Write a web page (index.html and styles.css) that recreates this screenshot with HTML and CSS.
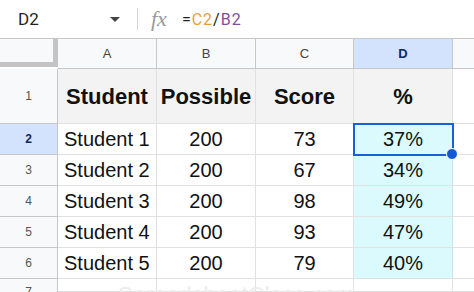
FILE: index.html
```html
<!DOCTYPE html>
<html lang="en">
<head>
    <meta charset="UTF-8">
    <title>Score percentage</title>
    <link rel="stylesheet" href="styles.css">
</head>
<body>
    <!-- formula bar -->
    <div class="toolbar">
        <div class="name-box">D2</div>
        <div class="caret"></div>
        <div class="divider"></div>
        <div class="fx">fx</div>
        <div class="formula">=<span class="ref-c">C2</span>/<span class="ref-b">B2</span></div>
    </div>

    <!-- grid -->
    <div class="sheet">
        <div class="corner"></div>
        <div class="col-head">A</div>
        <div class="col-head">B</div>
        <div class="col-head">C</div>
        <div class="col-head active">D</div>
        <div class="col-head blank"></div>

        <div class="row-head">1</div>
        <div class="cell title">Student</div>
        <div class="cell title">Possible</div>
        <div class="cell title">Score</div>
        <div class="cell title">%</div>
        <div class="cell blank"></div>

        <div class="row-head active">2</div>
        <div class="cell name">Student 1</div>
        <div class="cell">200</div>
        <div class="cell">73</div>
        <div class="cell pct selected">37%</div>
        <div class="cell blank"></div>

        <div class="row-head">3</div>
        <div class="cell name">Student 2</div>
        <div class="cell">200</div>
        <div class="cell">67</div>
        <div class="cell pct">34%</div>
        <div class="cell blank"></div>

        <div class="row-head">4</div>
        <div class="cell name">Student 3</div>
        <div class="cell">200</div>
        <div class="cell">98</div>
        <div class="cell pct">49%</div>
        <div class="cell blank"></div>

        <div class="row-head">5</div>
        <div class="cell name">Student 4</div>
        <div class="cell">200</div>
        <div class="cell">93</div>
        <div class="cell pct">47%</div>
        <div class="cell blank"></div>

        <div class="row-head">6</div>
        <div class="cell name">Student 5</div>
        <div class="cell">200</div>
        <div class="cell">79</div>
        <div class="cell pct">40%</div>
        <div class="cell blank"></div>

        <div class="row-head last">7</div>
        <div class="cell"></div>
        <div class="cell"></div>
        <div class="cell"></div>
        <div class="cell"></div>
        <div class="cell blank"></div>

        <div class="watermark">SpreadsheetClass.com</div>
    </div>
</body>
</html>
```

FILE: styles.css
```css
* {
    box-sizing: border-box;
}
body {
    margin: 0;
    width: 474px;
    height: 292px;
    overflow: hidden;
    background: #fff;
    font-family: Arial, "Liberation Sans", sans-serif;
    color: #111;
}
.toolbar {
    height: 39px;
    display: flex;
    align-items: center;
    border-bottom: 1px solid #c4c7c5;
    background: #fff;
}
.name-box {
    width: 104px;
    padding-left: 18px;
    font-family: Roboto, Arial, sans-serif;
    font-size: 17px;
    color: #1f1f1f;
}
.caret {
    width: 0;
    height: 0;
    border-left: 5px solid transparent;
    border-right: 5px solid transparent;
    border-top: 5px solid #444;
    margin-left: 6px;
}
.divider {
    width: 1px;
    height: 22px;
    background: #d5d5d5;
    margin-left: 17px;
}
.fx {
    margin-left: 13px;
    font-family: "Liberation Serif", "DejaVu Serif", serif;
    font-style: italic;
    font-size: 22px;
    color: #9a9a9a;
    letter-spacing: 0;
}
.formula {
    margin-left: 15px;
    font-family: Roboto, Arial, sans-serif;
    font-size: 16px;
    color: #222;
    letter-spacing: 1px;
}
.ref-c {
    color: #e69f3c;
}
.ref-b {
    color: #7d4f9a;
}
.sheet {
    position: relative;
    display: grid;
    grid-template-columns: 58px 99px 99px 98px 99px 1fr;
    grid-template-rows: 30px 55px 31px 31px 31px 31px 31px 13px;
}
.corner {
    background: #f8f9fa;
    border-right: 5px solid #c4c4c4;
    border-bottom: 5px solid #c4c4c4;
    margin-bottom: 2px;
}
.col-head {
    display: flex;
    align-items: center;
    justify-content: center;
    background: #f8f9fa;
    border-right: 1px solid #c7c7c7;
    border-bottom: 1px solid #c7c7c7;
    font-size: 13px;
    color: #444;
}
.col-head.active {
    background: #d3e3fd;
    color: #0b2a60;
    font-weight: bold;
}
.col-head.blank {
    border-right: none;
}
.row-head {
    display: flex;
    align-items: center;
    justify-content: center;
    background: #f8f9fa;
    border-right: 1px solid #c7c7c7;
    border-bottom: 1px solid #c7c7c7;
    font-size: 12px;
    color: #555;
}
.row-head.active {
    background: #d3e3fd;
    color: #0b2a60;
    font-weight: bold;
}
.row-head.last {
    align-items: flex-start;
    padding-top: 7px;
    border-bottom: none;
    line-height: 1;
}
.cell {
    display: flex;
    align-items: center;
    justify-content: center;
    border-right: 1px solid #e1e1e1;
    border-bottom: 1px solid #e1e1e1;
    font-size: 20px;
    color: #111;
    background: #fff;
}
.cell.title {
    background: #f3f3f3;
    font-size: 22px;
    font-weight: bold;
    padding-top: 2px;
}
.cell.name {
    justify-content: flex-start;
    padding-left: 6px;
}
.cell.pct {
    background: #dafafd;
    border-right-color: #c9e6ea;
}
.cell.blank {
    background: #fff;
    border-right: none;
}
.cell.selected {
    position: relative;
    outline: 2px solid #1a5fd3;
    outline-offset: -1px;
}
.cell.selected::after {
    content: "";
    position: absolute;
    right: -6px;
    bottom: -6px;
    width: 10px;
    height: 10px;
    border-radius: 50%;
    background: #1558d6;
    border: 1px solid #fff;
}
.watermark {
    position: absolute;
    left: 118px;
    top: 245px;
    font-size: 22px;
    line-height: 1;
    color: #ececec;
    letter-spacing: 0.5px;
    pointer-events: none;
}
```
